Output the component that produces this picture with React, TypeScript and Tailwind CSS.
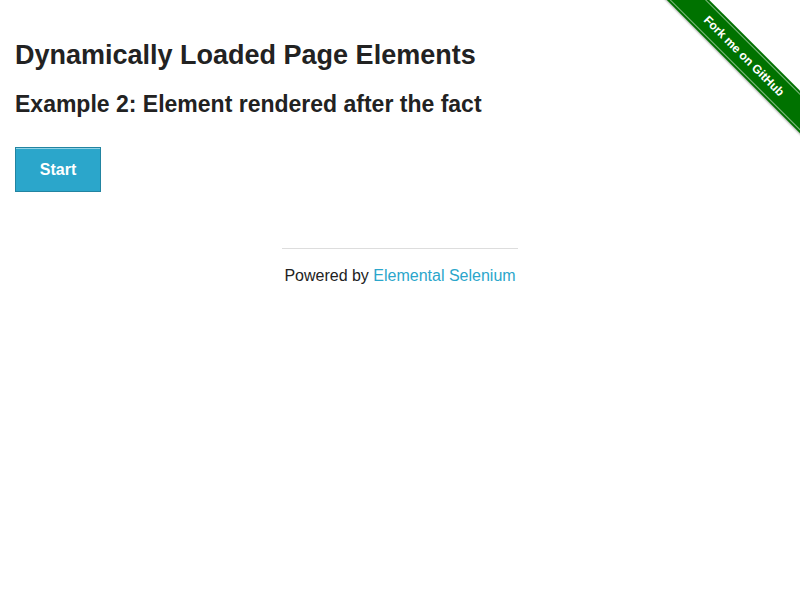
export default function App() {
  return (
    <div className="relative w-[800px] h-[600px] bg-white overflow-hidden text-[#222222]" style={{ fontFamily: '"Liberation Sans", Arial, sans-serif' }}>
      <div className="absolute top-0 right-0 w-[149px] h-[149px] overflow-hidden">
        <div className="absolute left-[-7px] top-[41px] w-[200px] h-[30px] rotate-45 bg-[#007200] flex items-center justify-center shadow-[0_1px_2px_rgba(0,0,0,0.3)]">
          <div className="absolute left-0 right-0 top-[2px] border-t border-[#ffffff80]" />
          <div className="absolute left-0 right-0 bottom-[2px] border-t border-[#ffffff80]" />
          <span className="text-white font-bold text-[12px]">Fork me on GitHub</span>
        </div>
      </div>
      <div className="px-[15px] pt-[39px]">
        <h3 className="text-[27px] leading-[32px] font-bold">Dynamically Loaded Page Elements</h3>
        <h4 className="mt-[19px] text-[23px] leading-[28px] font-bold">Example 2: Element rendered after the fact</h4>
        <div className="mt-[29px]">
          <button className="w-[86px] h-[45px] bg-[#2ba6cb] border border-[#2284a1] text-white font-bold text-[16px] flex items-center justify-center shadow-[inset_0_1px_0_rgba(255,255,255,0.5)]">Start</button>
        </div>
      </div>
      <div className="mt-[56px] flex flex-col items-center">
        <div className="w-[236px] border-t border-[#dddddd]" />
        <div className="mt-[17px] text-[16px] leading-[20px]">
          Powered by <a className="text-[#2ba6cb]" href="#">Elemental Selenium</a>
        </div>
      </div>
    </div>
  );
}
